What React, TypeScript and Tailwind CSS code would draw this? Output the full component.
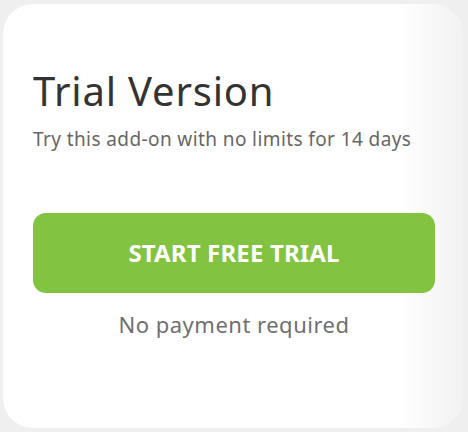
export default function App() {
  return (
    <div className="w-[468px] h-[432px] bg-[#efefef] p-[3px] pt-[4px] pr-[5px] pb-[4px]" style={{ fontFamily: '"Noto Sans", "Open Sans", sans-serif' }}>
      <div className="h-full rounded-[30px] bg-gradient-to-r from-white from-[86%] to-[#f2f2f2] px-[30px] pt-[63px]">
        <h1 className="text-[40px] leading-[48px] text-[#333] tracking-[0.8px]">Trial Version</h1>
        <p className="mt-[13px] text-[19px] leading-[22px] text-[#666] tracking-[0.4px]">Try this add-on with no limits for 14 days</p>
        <button className="mt-[63px] w-[402px] h-[80px] rounded-[13px] bg-[#82c341] text-white text-[24px] font-bold tracking-[0.15px]">
          START FREE TRIAL
        </button>
        <p className="mt-[18px] w-[402px] text-center text-[22px] leading-[26px] text-[#6f6f6f] tracking-[0.5px]">No payment required</p>
      </div>
    </div>
  )
}
